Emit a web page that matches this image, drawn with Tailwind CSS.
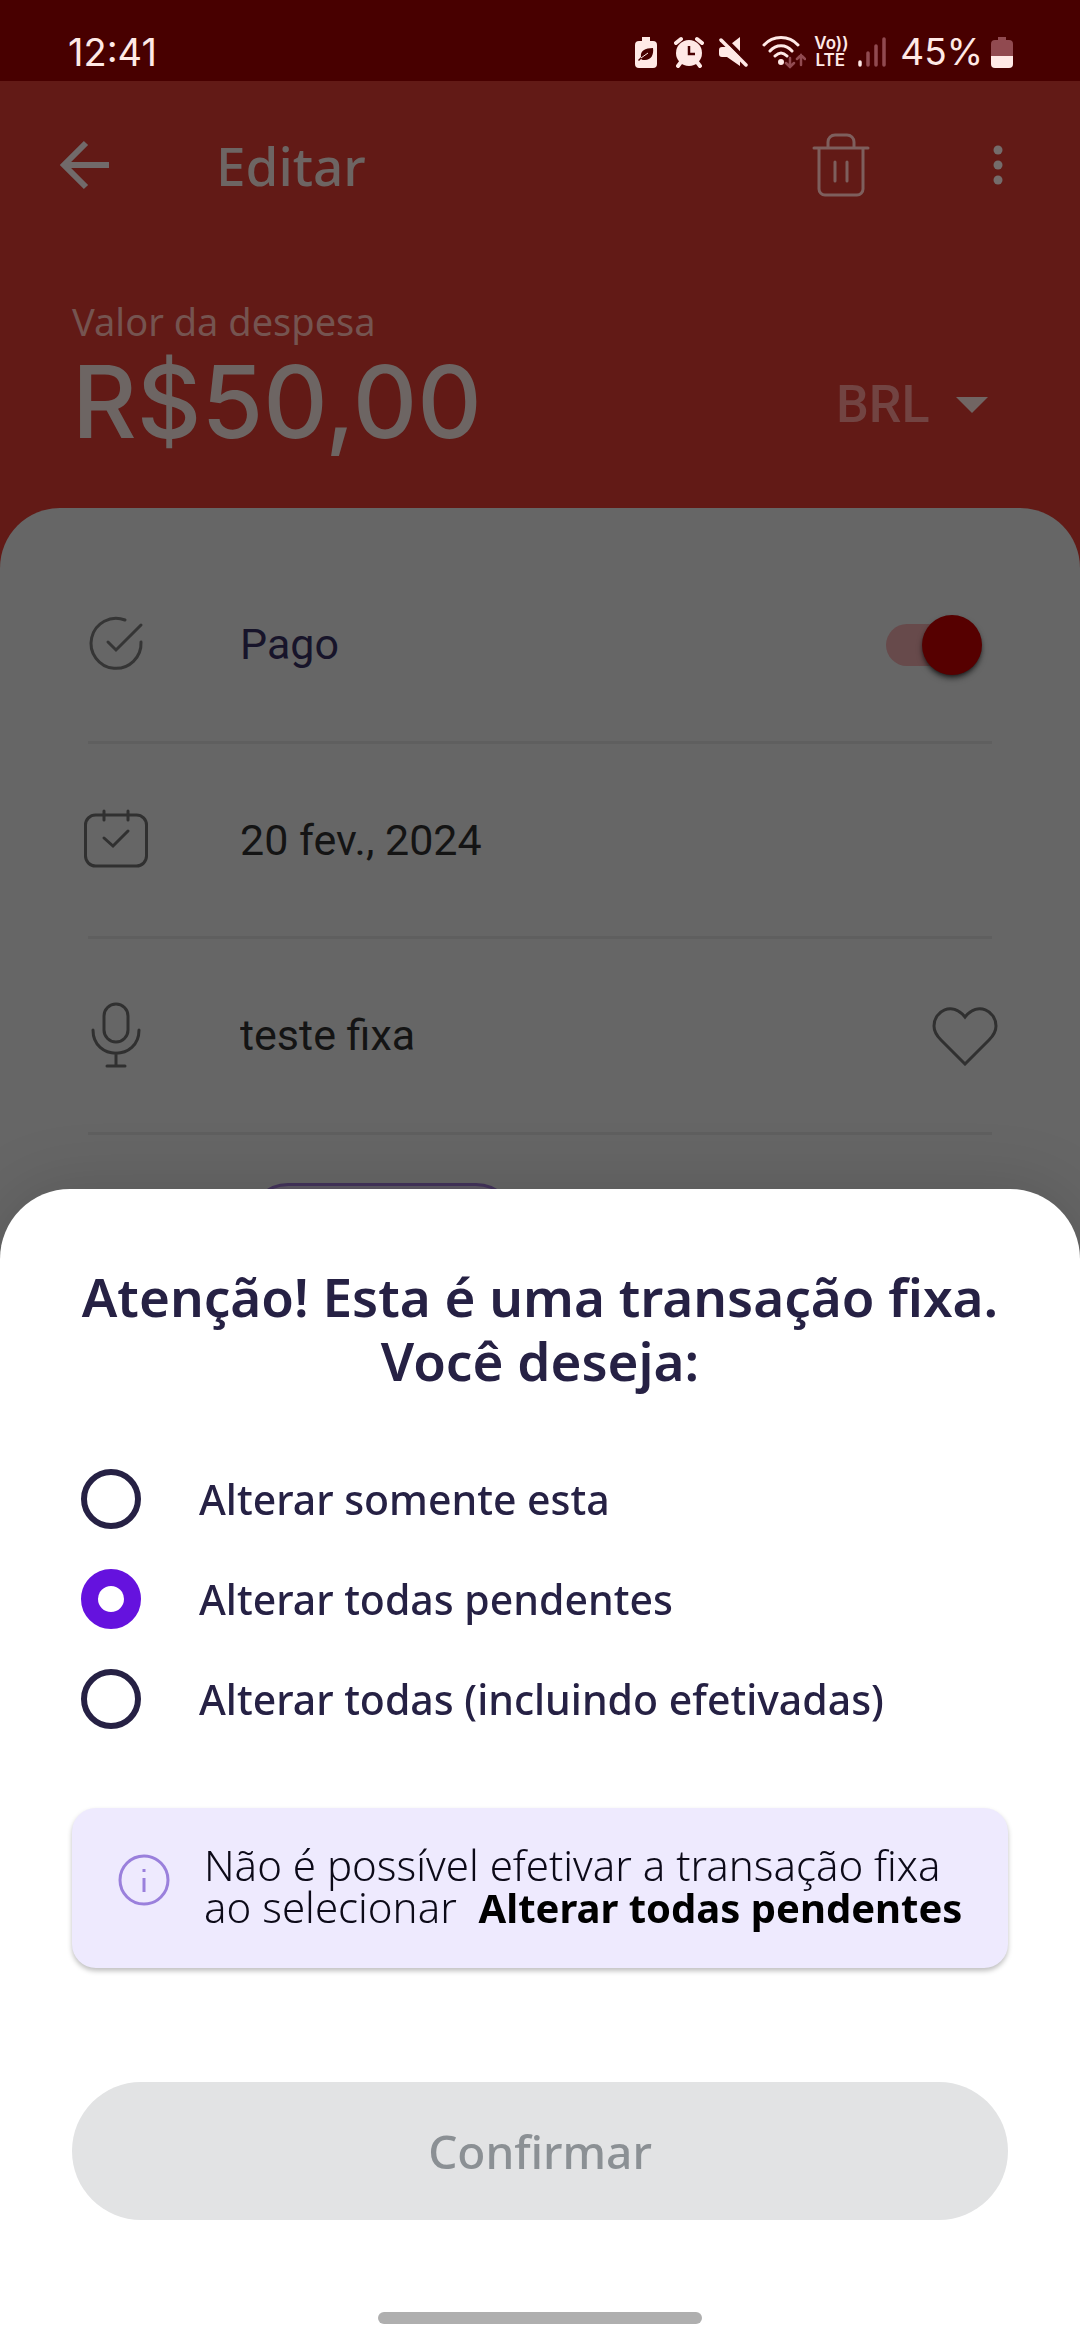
<!DOCTYPE html>
<html lang="pt-BR">
<head>
<meta charset="utf-8">
<meta name="viewport" content="width=device-width, initial-scale=1">
<title>Editar despesa</title>
<script src="https://cdn.jsdelivr.net/npm/@tailwindcss/browser@4"></script>
</head>
<body class="relative min-h-screen overflow-hidden bg-[#666666] font-['Noto_Sans',sans-serif]">

<!-- Status bar -->
<div class="flex h-[81px] items-center justify-between bg-[#480000] pt-[22px] pr-[67px] pl-[68px] text-[#ffe9e6] font-['Inter',sans-serif]">
  <time class="text-[38px] leading-none">12:41</time>
  <div class="flex items-center">
    <svg class="mr-4 h-8 w-6" viewBox="0 0 24 32" fill="currentColor"><path d="M8 1h8v4h3a4 4 0 0 1 4 4v19a4 4 0 0 1-4 4H5a4 4 0 0 1-4-4V9a4 4 0 0 1 4-4h3z"/><path fill="#480000" d="M19 12c1 7-2 12-8 12-2 0-3 0-4-1l-2 2-1-1 3-3c-1-6 4-9 12-9z"/><path stroke="#ffe9e6" d="M7 22l7-5" fill="none"/></svg>
    <svg class="mr-3.5 h-8 w-[30px]" viewBox="0 0 30 32" fill="currentColor"><circle cx="15" cy="17" r="13"/><path d="M7 26l-3 4M23 26l3 4M2 7l5-4M28 7l-5-4" stroke="currentColor" stroke-width="4" stroke-linecap="round"/><path d="M15 10v8h6" fill="none" stroke="#480000" stroke-width="2.5"/></svg>
    <svg class="mr-3.5 h-8 w-[30px]" viewBox="0 0 30 32" fill="currentColor"><path d="M4 11h5L22 1v29L9 21H4a3 3 0 0 1-3-3v-4a3 3 0 0 1 3-3z"/><path d="M-1 4l28 28" stroke="#480000" stroke-width="4" transform="translate(4 -5)"/><path d="M3 4l25 25" stroke="currentColor" stroke-width="3.500" stroke-linecap="round"/></svg>
    <svg class="mr-2 h-[34px] w-[44px]" viewBox="0 0 44 34" fill="none" stroke="currentColor" stroke-width="3" stroke-linecap="round"><path d="M2 10c9-10 25-10 34 0M8 16c6-7 16-7 22 0M13 21c4-4 8-4 12 0"/><circle cx="19" cy="27" r="1.5" fill="currentColor"/><path stroke="#914a50" stroke-width="2.5" d="M28 23v9m-4-4l4 4 4-4M39 30v-10m-4 4l4-4 4 4"/></svg>
    <span class="mr-3 w-8 text-center text-[17px] leading-[17px] font-semibold"><span class="block whitespace-nowrap">Vo))</span><span class="block">LTE</span></span>
    <svg class="mr-3.5 h-8 w-7" viewBox="0 0 28 32" fill="none" stroke="#914a50" stroke-width="3.5" stroke-linecap="round"><path stroke="#ffe9e6" d="M2 26v3"/><path d="M10 17v12M18 10v19M26 3v26"/></svg>
    <span class="mr-2 text-[37px] leading-none">45%</span>
    <svg class="h-8 w-[22px]" viewBox="0 0 22 32"><path fill="#914a50" d="M7 1h8v3h3a4 4 0 0 1 4 4v13H0V8a4 4 0 0 1 4-4h3z"/><path fill="#ffe9e6" d="M0 20h22v8a4 4 0 0 1-4 4H4a4 4 0 0 1-4-4z"/></svg>
  </div>
</div>

<!-- Expense header -->
<header class="bg-[#621a16] pb-[111px] text-[#6d6563]">
  <div class="flex h-[168px] items-center pr-[76px] pl-[56px]">
    <button type="button" aria-label="Voltar" class="mr-[104px]"><svg class="size-14" viewBox="0 0 56 56" fill="none" stroke="#716a6a" stroke-width="6"><path d="M53 28H9M30 6L8 28l22 22"/></svg></button>
    <h1 class="flex-1 text-[53px] leading-none font-medium">Editar</h1>
    <button type="button" aria-label="Excluir"><svg class="h-16 w-[58px]" viewBox="0 0 58 64" fill="none" stroke="#7e5f5d" stroke-width="3" stroke-linecap="round"><path d="M2 15h54M7 16v40a6 6 0 0 0 6 6h32a6 6 0 0 0 6-6V16M16 14V9a7 7 0 0 1 7-7h12a7 7 0 0 1 7 7v5M23 29v19M35 29v19"/></svg></button>
    <button type="button" aria-label="Mais opções" class="ml-[122px]"><svg class="h-10 w-3" viewBox="0 0 12 40" fill="#746c6b"><circle cx="6" cy="5" r="4.500"/><circle cx="6" cy="20" r="4.500"/><circle cx="6" cy="35" r="4.500"/></svg></button>
  </div>
  <div class="flex items-end justify-between pt-[47px] pr-[92px] pl-[72px]">
    <div class="w-[500px]">
      <label for="valor" class="block text-[38px] leading-[50px] text-[#755450]">Valor da despesa</label>
      <input id="valor" value="R$50,00" class="block h-[111px] w-full font-['Inter',sans-serif] text-[100px] leading-[111px] font-medium outline-none">
    </div>
    <div class="relative mb-5 flex items-center">
      <select aria-label="Moeda" class="h-16 w-[152px] appearance-none font-['Roboto',sans-serif] text-[52px] leading-[64px] font-medium text-[#724442] outline-none"><option>BRL</option></select>
      <svg class="pointer-events-none absolute right-0 h-4 w-[32px]" viewBox="0 0 32 16" fill="#716563"><path d="M0 0h32L16 16z"/></svg>
    </div>
  </div>
</header>

<!-- Transaction details -->
<main class="-mt-[60px] rounded-t-[60px] bg-[#666666] px-[88px] pt-[40px] font-['Roboto',sans-serif] text-[43px] text-[#141414]">
  <label class="flex h-[196px] items-center border-b-3 border-[#5f5f5f] pr-[18px]">
    <svg class="-ml-1 mr-[84px] size-[72px]" viewBox="0 0 72 72" fill="none" stroke="#353535" stroke-width="3" stroke-linecap="round"><path d="M41 11a25 25 0 1 0 16 22M24 33l8 8L57 16"/></svg>
    <span class="flex-1 text-[#17142a]">Pago</span>
    <input type="checkbox" role="switch" checked class="peer sr-only">
    <span class="flex h-[42px] w-[88px] items-center justify-end rounded-full bg-[#674a4b]"><span class="-mr-2 size-[60px] shrink-0 rounded-full bg-[#560000] shadow-md shadow-black/60"></span></span>
  </label>
  <div class="flex h-[195px] items-center border-b-3 border-[#5f5f5f]">
    <svg class="-ml-1 mr-[84px] size-[72px]" viewBox="0 0 72 72" fill="none" stroke="#303030" stroke-width="3" stroke-linecap="round"><rect x="1.500" y="11" width="61" height="51" rx="10"/><path d="M20 7v9M44 7v9M20 34l9 8 15-15"/></svg>
    <button type="button">20 fev., 2024</button>
  </div>
  <div class="flex h-[196px] items-center border-b-3 border-[#5f5f5f]">
    <svg class="-ml-1 mr-[84px] size-[72px]" viewBox="0 0 72 72" fill="none" stroke="#303030" stroke-width="3" stroke-linecap="round"><rect x="20" y="4" width="24" height="38" rx="12"/><path d="M9 30c0 31 46 31 46 0M32 53v13M23 66h18"/></svg>
    <input aria-label="Descrição" value="teste fixa" class="min-w-0 flex-1 outline-none">
    <button type="button" aria-label="Favoritar" class="-mr-[6px]"><svg class="h-[60px] w-[66px]" viewBox="0 0 66 60" fill="none" stroke="#303030" stroke-width="3"><path d="M33 11C20-5 2 5 2 20c0 7 4 11 7 14l24 24 24-24c3-3 7-7 7-14C64 5 46-5 33 11z"/></svg></button>
  </div>
  <div class="mt-[48px] ml-[160px] h-20 w-[268px] rounded-full border-3 border-[#44345c] bg-[#5f5a66]"></div>
</main>

<!-- Bottom sheet -->
<form role="dialog" aria-labelledby="titulo" class="fixed inset-x-0 bottom-0 rounded-t-[70px] bg-white px-[72px] pt-[76px] pb-4 text-[#262144] shadow-[0_0_70px_rgba(0,0,0,0.15)]">
  <h2 id="titulo" class="-mx-3 text-center text-[53px] leading-[64px] font-semibold">Atenção! Esta é uma transação fixa.<br>Você deseja:</h2>
  <div class="mt-[56px] flex flex-col px-[9px] text-[41px] leading-[60px] font-medium">
    <label class="flex h-[100px] items-center gap-[58px]"><input type="radio" name="escopo" class="size-[60px] appearance-none rounded-full border-6 border-[#262144]">Alterar somente esta</label>
    <label class="flex h-[100px] items-center gap-[58px]"><input type="radio" name="escopo" checked class="size-[60px] appearance-none rounded-full border-[#6512de] checked:border-[17px]">Alterar todas pendentes</label>
    <label class="flex h-[100px] items-center gap-[58px]"><input type="radio" name="escopo" class="size-[60px] appearance-none rounded-full border-6 border-[#262144]">Alterar todas (incluindo efetivadas)</label>
  </div>
  <div class="mt-[59px] flex h-[160px] items-start rounded-3xl bg-[#eeeafe] pt-[36px] pl-[46px] shadow-[0_3px_5px_rgba(0,0,0,0.25)]">
    <svg class="mt-2.5 mr-[34px] size-[52px] shrink-0" viewBox="0 0 52 52" fill="none" stroke="#9a80dc" stroke-width="3"><circle cx="26" cy="26" r="24"/><path d="M26 24v14M26 15v3"/></svg>
    <p class="text-[42px] leading-[42px] font-light whitespace-nowrap text-[#0c0a18]">Não é possível efetivar a transação fixa<br>ao selecionar&nbsp; <strong class="text-[40px] font-bold text-black">Alterar todas pendentes</strong></p>
  </div>
  <button type="submit" disabled class="mt-[114px] block h-[138px] w-full rounded-full bg-[#e2e3e4] text-[46px] font-medium text-[#8b9094]">Confirmar</button>
  <div class="mx-auto mt-[92px] h-3 w-[324px] rounded-full bg-[#afafaf]"></div>
</form>
</body>
</html>
